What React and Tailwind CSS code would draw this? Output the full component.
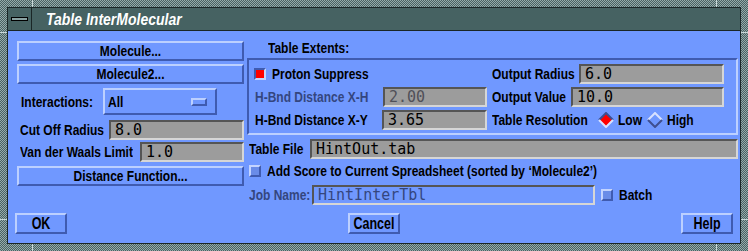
import React from "react";

const LBL = "font-['Liberation_Sans',sans-serif] font-bold text-[12px] leading-[14px] text-black whitespace-nowrap scale-y-[1.2]";
const DIM = "font-['Liberation_Sans',sans-serif] font-bold text-[12px] leading-[14px] text-[#34467e] whitespace-nowrap scale-y-[1.2]";
const BIG = "font-['Liberation_Sans',sans-serif] font-bold text-[12.5px] leading-[14px] text-black whitespace-nowrap scale-y-[1.3]";
const MONO = "font-['DejaVu_Sans_Mono',monospace] text-[15px] leading-[16px] whitespace-nowrap";
const RAISED = "border-2 border-t-[#bcd0ff] border-l-[#bcd0ff] border-r-[#3f5bb0] border-b-[#3f5bb0]";

function Btn({ label, className = "", big = false }) {
  return (
    <div className={`${RAISED} h-[20px] flex items-center justify-center bg-[#7098ff] ${className}`}>
      <span className={big ? BIG : LBL}>{label}</span>
    </div>
  );
}

function Field({ value, w, dim = false, blue = false }) {
  return (
    <div
      className={`h-[20px] shrink-0 border-2 border-t-[#555555] border-l-[#555555] border-r-[#d6d6d6] border-b-[#d6d6d6] flex items-center pl-[4px] ${blue ? "bg-[#7098ff]" : "bg-[#9c9c9c]"} ${w}`}
    >
      <span className={`${MONO} ${dim ? (blue ? "text-[#34467e]" : "text-[#505058]") : "text-black"}`}>{value}</span>
    </div>
  );
}

function Check({ on = false }) {
  return on ? (
    <div className="w-[12px] h-[12px] shrink-0 border-2 border-t-[#3f5bb0] border-l-[#3f5bb0] border-r-[#c4d4ff] border-b-[#c4d4ff] bg-[#ff0000]" />
  ) : (
    <div className="w-[12px] h-[12px] shrink-0 border-2 border-t-[#c4d4ff] border-l-[#c4d4ff] border-r-[#3f5bb0] border-b-[#3f5bb0] bg-[#6a8ce8]" />
  );
}

function Diamond({ on = false }) {
  const dark = "#3f4f90";
  const light = "#d8e2ff";
  return (
    <svg width="16" height="16" viewBox="0 0 16 16" className="shrink-0">
      <polygon points="8,1 15,8 8,15 1,8" fill={on ? "#ff0000" : "#7098ff"} />
      <path d="M1 8 L8 1 L15 8" fill="none" stroke={on ? dark : light} strokeWidth="2" />
      <path d="M1 8 L8 15 L15 8" fill="none" stroke={on ? light : dark} strokeWidth="2" />
    </svg>
  );
}

export default function App() {
  return (
    <div className="relative w-[748px] h-[251px] p-[7px] flex flex-col bg-[repeating-conic-gradient(#4a6262_0%_25%,#94aaaa_0%_50%)] bg-[length:2px_2px]">
      {/* resize handle notches in the window frame */}
      <div className="absolute top-0 left-[32px] w-[1px] h-[7px] bg-[#c8d8d8]" />
      <div className="absolute top-0 left-[716px] w-[1px] h-[7px] bg-[#c8d8d8]" />
      <div className="absolute bottom-0 left-[32px] w-[1px] h-[7px] bg-[#c8d8d8]" />
      <div className="absolute bottom-0 left-[716px] w-[1px] h-[7px] bg-[#c8d8d8]" />
      <div className="absolute left-0 top-[32px] w-[7px] h-[1px] bg-[#c8d8d8]" />
      <div className="absolute left-0 top-[219px] w-[7px] h-[1px] bg-[#c8d8d8]" />
      <div className="absolute right-0 top-[32px] w-[7px] h-[1px] bg-[#c8d8d8]" />
      <div className="absolute right-0 top-[219px] w-[7px] h-[1px] bg-[#c8d8d8]" />

      <div className="flex-1 flex flex-col border border-[#1a2626]">
        {/* title bar */}
        <div className="h-[23px] flex bg-[#466262] border-b border-[#1a2626]">
          <div className="w-[24px] flex items-center justify-center border-r border-[#1a2626]">
            <div className="w-[17px] h-[4px] border border-black bg-[#8aa2a2]" />
          </div>
          <div className="pl-[14px] flex items-center font-['Liberation_Sans',sans-serif] font-bold italic text-[14px] text-white scale-y-[1.12]">
            Table InterMolecular
          </div>
        </div>

        <div className="flex-1 flex flex-col bg-[#7098ff]">
          <div className="h-[174px] flex">
            {/* left column */}
            <div className="ml-[9px] w-[227px] pt-[10px] flex flex-col">
              <Btn label="Molecule..." />
              <Btn label="Molecule2..." className="mt-[3px]" />
              <div className="mt-[4px] h-[27px] flex items-center">
                <div className={`${LBL} w-[86px] pl-[4px]`}>Interactions:</div>
                <div className="w-[114px] h-[27px] border-2 border-t-[#bcd0ff] border-l-[#bcd0ff] border-r-[#3f5bb0] border-b-[#3f5bb0] flex items-center justify-between pl-[3px] pr-[8px]">
                  <span className={LBL}>All</span>
                  <div className="w-[16px] h-[8px] border-2 border-t-[#bcd0ff] border-l-[#bcd0ff] border-r-[#3f5bb0] border-b-[#3f5bb0] bg-[#7098ff]" />
                </div>
              </div>
              <div className="mt-[5px] h-[20px] flex items-center">
                <div className={`${LBL} flex-1 pl-[3px]`}>Cut Off Radius</div>
                <Field value="8.0" w="w-[135px]" />
              </div>
              <div className="mt-[2px] h-[20px] flex items-center">
                <div className={`${LBL} flex-1 pl-[3px]`}>Van der Waals Limit</div>
                <Field value="1.0" w="w-[104px]" />
              </div>
              <Btn label="Distance Function..." className="mt-[4px]" />
            </div>

            {/* right column */}
            <div className="ml-[3px] w-[491px] flex flex-col">
              <div className="h-[27px] pt-[10px] pl-[21px]">
                <div className={LBL}>Table Extents:</div>
              </div>
              <div className="h-[78px] border-2 border-t-[#3f5bb0] border-l-[#3f5bb0] border-r-[#bcd0ff] border-b-[#bcd0ff] flex pt-[4px]">
                <div className="ml-[5px] w-[233px] flex flex-col gap-[3px]">
                  <div className="h-[20px] flex items-center gap-[6px]">
                    <Check on />
                    <span className={LBL}>Proton Suppress</span>
                  </div>
                  <div className="h-[20px] flex items-center">
                    <div className={`${DIM} flex-1 pl-[1px]`}>H-Bnd Distance X-H</div>
                    <Field value="2.00" w="w-[104px]" dim />
                  </div>
                  <div className="h-[20px] flex items-center">
                    <div className={`${LBL} flex-1 pl-[1px]`}>H-Bnd Distance X-Y</div>
                    <Field value="3.65" w="w-[105px]" />
                  </div>
                </div>
                <div className="ml-[5px] w-[232px] flex flex-col gap-[3px]">
                  <div className="h-[20px] flex items-center">
                    <div className={`${LBL} flex-1`}>Output Radius</div>
                    <Field value="6.0" w="w-[145px]" />
                  </div>
                  <div className="h-[20px] flex items-center">
                    <div className={`${LBL} flex-1`}>Output Value</div>
                    <Field value="10.0" w="w-[153px]" />
                  </div>
                  <div className="h-[20px] flex items-center">
                    <div className={`${LBL} w-[106px]`}>Table Resolution</div>
                    <Diamond on />
                    <span className={`${LBL} ml-[4px] w-[29px]`}>Low</span>
                    <Diamond />
                    <span className={`${LBL} ml-[4px]`}>High</span>
                  </div>
                </div>
              </div>
              <div className="mt-[4px] h-[20px] flex items-center pl-[2px]">
                <div className={`${LBL} flex-1`}>Table File</div>
                <Field value="HintOut.tab" w="w-[428px]" />
              </div>
              <div className="mt-[5px] h-[14px] flex items-center pl-[2px] gap-[6px]">
                <Check />
                <span className={LBL}>Add Score to Current Spreadsheet (sorted by ‘Molecule2’)</span>
              </div>
              <div className="mt-[7px] h-[20px] flex items-center pl-[2px]">
                <div className={`${DIM} w-[63px]`}>Job Name:</div>
                <Field value="HintInterTbl" w="w-[283px]" dim blue />
                <div className="ml-[6px]">
                  <Check />
                </div>
                <span className={`${LBL} ml-[6px]`}>Batch</span>
              </div>
            </div>
          </div>

          {/* action area */}
          <div className="mt-[8px] px-[7px] flex justify-between">
            <Btn label="OK" big className="w-[52px] h-[21px]" />
            <Btn label="Cancel" big className="w-[52px] h-[21px]" />
            <Btn label="Help" big className="w-[52px] h-[21px]" />
          </div>
        </div>
      </div>
    </div>
  );
}
